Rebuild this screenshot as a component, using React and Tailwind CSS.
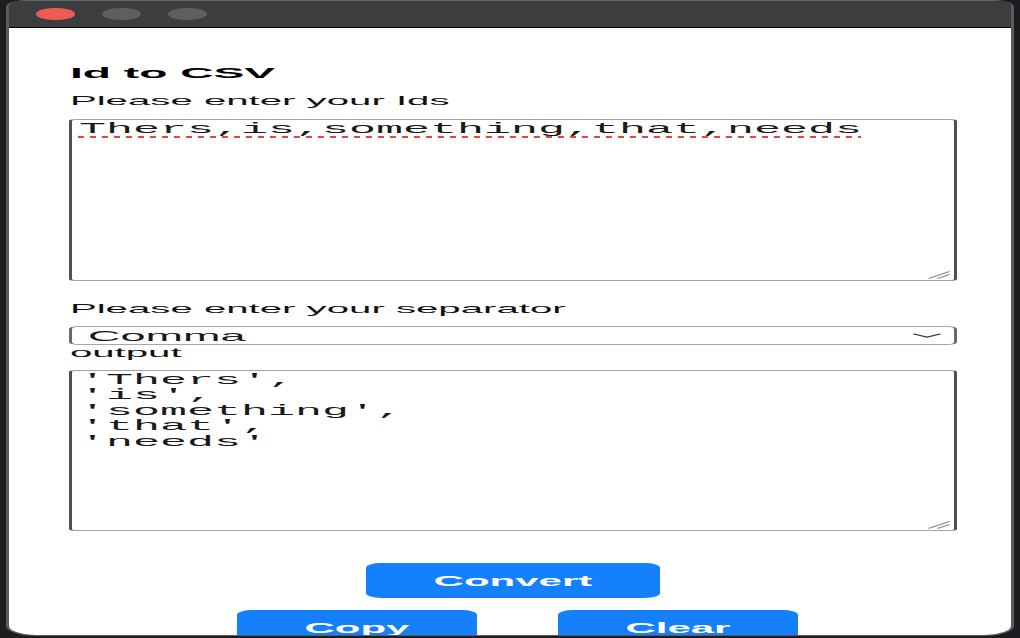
import React, { useState } from 'react';

// The popup is photographed squeezed into a wide frame, so it is laid out at
// its natural 340px width and stretched 3x horizontally as a whole.

const SEPARATORS = { Comma: ',', Semicolon: ';', Space: ' ' };

function Grip() {
  return (
    <svg className="absolute bottom-[1px] right-[1px] w-[9px] h-[9px]" viewBox="0 0 9 9">
      <path d="M1.5 8.5 L8.5 1.5 M4.5 8.5 L8.5 4.5" stroke="#8c8c8c" strokeWidth="1" fill="none" />
    </svg>
  );
}

function Box({ className, children }) {
  return (
    <div
      className={
        'relative w-full border border-y-[#a3a3a3] border-x-[#505050] rounded-[2px] px-[2px] py-[2px] ' +
        "font-['Liberation_Mono',monospace] text-[15px] leading-[15.4px] text-[#1a1a1a] whitespace-pre overflow-hidden " +
        className
      }
    >
      {children}
      <Grip />
    </div>
  );
}

export default function App() {
  const [ids] = useState('Thers,is,something,that,needs');
  const [sep] = useState('Comma');

  const output = ids
    .split(SEPARATORS[sep])
    .map((s) => `'${s}'`)
    .join(',\n');

  return (
    <div className="w-[1020px] h-[638px] overflow-hidden bg-[#1c1d21]">
      <div className="w-[340px] h-[638px] origin-top-left scale-x-300 font-['Liberation_Sans',Arial,sans-serif]">
        {/* Window */}
        <div className="ml-[2.3px] w-[336.2px] h-[636px] flex flex-col rounded-t-[7px] rounded-b-[10px] overflow-hidden border-x border-b border-[#5c5c5c]">
          {/* Title bar */}
          <div className="h-[28px] shrink-0 bg-[#3c3d3f] border-t border-t-[#646466] border-b border-b-black flex items-center pl-[8.4px] gap-[8.6px]">
            <span className="w-[13.5px] h-[12px] rounded-full bg-[#ee5b55]" />
            <span className="w-[13.5px] h-[12px] rounded-full bg-[#5e5e60]" />
            <span className="w-[13.5px] h-[12px] rounded-full bg-[#5e5e60]" />
          </div>

          {/* Body */}
          <div className="flex-1 bg-white pt-[36px] pl-[20px] overflow-hidden">
            <div className="w-[295.4px] flex flex-col">
              <h1 className="text-[15.4px] font-bold leading-[18px] text-black">Id to CSV</h1>

              <label className="mt-[11px] text-[13.4px] leading-[15px] text-[#111]">Please enter your Ids</label>
              <Box className="mt-[11px] h-[162px]">
                <span className="underline decoration-dotted decoration-[#e8453c] decoration-[1.5px] underline-offset-[3px]">
                  {ids}
                </span>
              </Box>

              <label className="mt-[20px] text-[13.4px] leading-[15px] text-[#111]">Please enter your separator</label>
              <div className="relative mt-[10px] h-[19px] border border-y-[#a8a8a8] border-x-[#6a6a6a] rounded-[3px] flex items-center pl-[5px] text-[15px] leading-[17px] text-[#1a1a1a]">
                {sep}
                <svg className="absolute right-[3.5px] top-[6px] w-[10px] h-[5px]" viewBox="0 0 10 5">
                  <path d="M0.5 0.8 L5 4.2 L9.5 0.8" stroke="#333" strokeWidth="1" fill="none" />
                </svg>
              </div>

              <label className="text-[13.4px] leading-[15px] text-[#111]">output</label>
              <Box className="mt-[10px] h-[161px]">{output}</Box>

              <button className="mt-[32px] mx-auto w-[98px] h-[35px] rounded-[5px] bg-[#1580fb] text-white font-bold text-[14px] leading-[16px]">
                Convert
              </button>

              <div className="mt-[12px] flex justify-center gap-[27px] pl-[3px]">
                <button className="w-[80px] h-[35px] shrink-0 rounded-[5px] bg-[#1580fb] text-white font-bold text-[14px] leading-[16px]">
                  Copy
                </button>
                <button className="w-[80px] h-[35px] shrink-0 rounded-[5px] bg-[#1580fb] text-white font-bold text-[14px] leading-[16px]">
                  Clear
                </button>
              </div>
            </div>
          </div>
        </div>
      </div>
    </div>
  );
}
